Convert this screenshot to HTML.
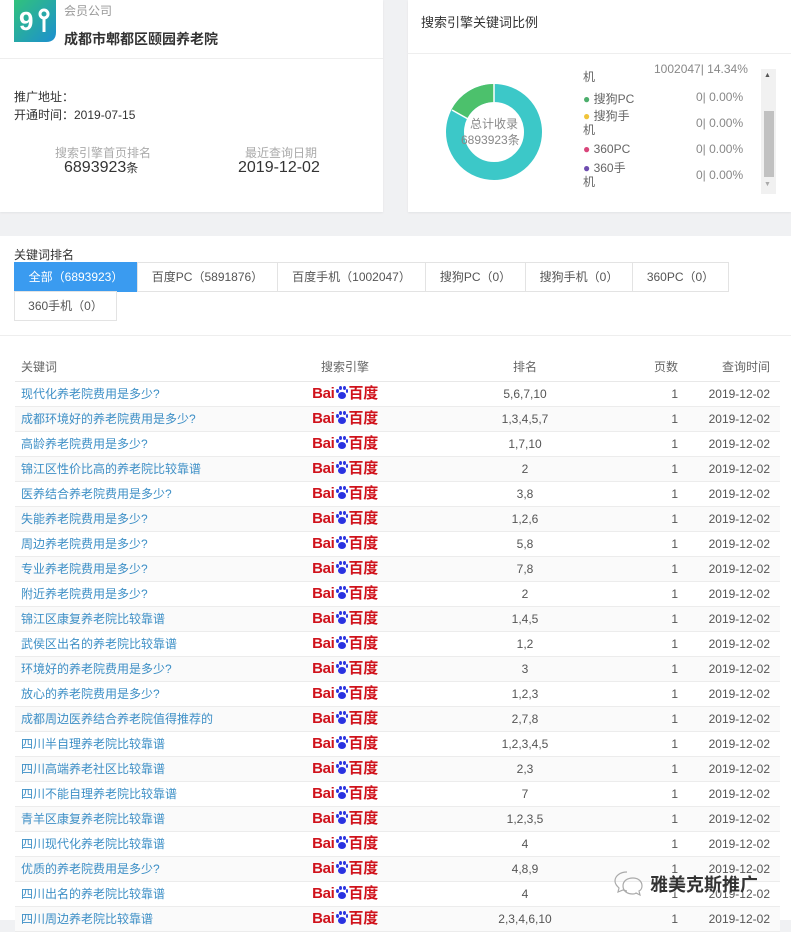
<!DOCTYPE html>
<html><head><meta charset="utf-8">
<style>
*{margin:0;padding:0;box-sizing:border-box}
body{width:791px;height:920px;overflow:hidden;background:#f0f1f3;font-family:"Liberation Sans","Noto Sans CJK SC",sans-serif;font-size:12px;color:#333;position:relative}
.card{position:absolute;background:#fff;box-shadow:0 1px 2px rgba(0,0,0,.06)}
.abs{position:absolute;white-space:nowrap}
.main{position:absolute;left:0;top:236px;width:791px;height:684px;background:#fff}
.tabs{position:absolute;left:14px;top:262px}
.tab{position:absolute;height:30px;line-height:29px;border:1px solid #e3e3e3;text-align:center;color:#555;font-size:12px;background:#fff}
.tab.on{background:#3a9bf0;color:#fff;border-color:#3a9bf0}
table{position:absolute;left:15px;top:352px;width:765px;border-collapse:collapse}
th{height:29px;font-weight:normal;color:#666;font-size:12px;border-bottom:1px solid #e8e8e8}
td{height:25px;border-bottom:1px solid #ececec;font-size:12px;color:#555}
tr:nth-child(even) td{background:#fafafa}
td.k{color:#3d8fc6;padding-left:6px}
.c1{width:220px;text-align:left;padding-left:6px}
.c2{width:220px;text-align:center}
.c3{width:140px;text-align:center}
.c4{width:85px;text-align:right;padding-right:2px}
.c5{text-align:right;padding-right:10px}
.bd{display:inline-block;font-weight:bold;color:#d0121b;font-size:15px;letter-spacing:-.3px;line-height:16px;vertical-align:middle}
.bd i{display:inline-block;width:12px;height:13px;position:relative;vertical-align:-1px;font-style:normal;margin:0 1px}
.bd i b{position:absolute;background:#2932e1;border-radius:50%}
</style></head><body>

<div class="card" style="left:0;top:0;width:383px;height:212px">
  <svg class="abs" style="left:14px;top:0" width="42" height="42" viewBox="0 0 42 42">
    <defs><linearGradient id="g" x1="0" y1="0" x2="1" y2="1"><stop offset="0" stop-color="#31c27c"/><stop offset="1" stop-color="#1c8fd0"/></linearGradient></defs>
    <path d="M0 0H42V32Q42 42 32 42H0Z" fill="url(#g)"/>
    <text x="5" y="30" font-family="Liberation Sans" font-weight="bold" font-size="26" fill="#fff">9</text>
    <circle cx="30" cy="14" r="4" fill="none" stroke="#fff" stroke-width="3"/><rect x="28.5" y="18" width="3" height="14" fill="#fff"/>
  </svg>
  <div class="abs" style="left:64px;top:2px;color:#999;font-size:12px">会员公司</div>
  <div class="abs" style="left:64px;top:29px;font-size:14px;font-weight:bold;color:#333">成都市郫都区颐园养老院</div>
  <div class="abs" style="left:0;top:58px;width:383px;border-top:1px solid #eee"></div>
  <div class="abs" style="left:14px;top:88px;color:#333">推广地址：</div>
  <div class="abs" style="left:14px;top:106px;color:#333">开通时间：2019-07-15</div>
  <div class="abs" style="left:55px;top:144px;color:#aaa">搜索引擎首页排名</div>
  <div class="abs" style="left:64px;top:159px;font-size:16px;color:#333">6893923<span style="font-size:12px">条</span></div>
  <div class="abs" style="left:245px;top:144px;color:#aaa">最近查询日期</div>
  <div class="abs" style="left:238px;top:159px;font-size:16px;color:#333">2019-12-02</div>
</div>

<div class="card" style="left:408px;top:0;width:383px;height:212px">
  <div class="abs" style="left:13px;top:12px;font-size:13px;color:#333">搜索引擎关键词比例</div>
  <div class="abs" style="left:0;top:53px;width:383px;border-top:1px solid #eee"></div>
  <svg class="abs" style="left:38px;top:84px" width="96" height="96" viewBox="0 0 96 96">
    <circle cx="48" cy="48" r="39" fill="none" stroke="#3cc8c8" stroke-width="18"/>
    <path d="M48 9 A39 39 0 0 0 13.5 29.7" fill="none" stroke="#4cc16c" stroke-width="18"/>
    <line x1="48" y1="0" x2="48" y2="18" stroke="#fff" stroke-width="1.5"/>
    <line x1="6" y1="26" x2="22" y2="35" stroke="#fff" stroke-width="1.5"/>
  </svg>
  <div class="abs" style="left:62px;top:115px;color:#888;font-size:12px">总计收录</div>
  <div class="abs" style="left:53px;top:131px;color:#888;font-size:12px">6893923条</div>
  <div class="abs" style="left:0;top:62px;width:383px;height:140px;overflow:hidden">
    <div class="abs" style="left:175px;top:6px;color:#666">机</div>
    <div class="abs" style="left:246px;top:0;color:#888">1002047| 14.34%</div>
    <div class="abs" style="left:175px;top:28px;color:#666"><span style="color:#4cae6c">●</span> 搜狗PC</div>
    <div class="abs" style="left:288px;top:28px;color:#888">0| 0.00%</div>
    <div class="abs" style="left:175px;top:47px;color:#666;line-height:14px"><span style="color:#f0c43a">●</span> 搜狗手<br>机</div>
    <div class="abs" style="left:288px;top:54px;color:#888">0| 0.00%</div>
    <div class="abs" style="left:175px;top:80px;color:#666"><span style="color:#d9457a">●</span> 360PC</div>
    <div class="abs" style="left:288px;top:80px;color:#888">0| 0.00%</div>
    <div class="abs" style="left:175px;top:99px;color:#666;line-height:14px"><span style="color:#6e4db0">●</span> 360手<br>机</div>
    <div class="abs" style="left:288px;top:106px;color:#888">0| 0.00%</div>
  </div>
  <div class="abs" style="left:353px;top:69px;width:15px;height:125px;background:#f1f1f1">
    <div class="abs" style="left:3px;top:42px;width:10px;height:66px;background:#c1c1c1"></div>
    <div class="abs" style="left:3px;top:3px;font-size:7px;color:#555">▲</div>
    <div class="abs" style="left:3px;top:112px;font-size:7px;color:#aaa">▼</div>
  </div>
</div>

<div class="main"></div>
<div class="abs" style="left:14px;top:246px;font-size:12px;color:#333">关键词排名</div>
<div class="tabs">
  <div class="tab on" style="left:0;top:0;width:124px">全部（6893923）</div>
  <div class="tab" style="left:123px;top:0;width:141px">百度PC（5891876）</div>
  <div class="tab" style="left:263px;top:0;width:149px">百度手机（1002047）</div>
  <div class="tab" style="left:411px;top:0;width:101px">搜狗PC（0）</div>
  <div class="tab" style="left:511px;top:0;width:108px">搜狗手机（0）</div>
  <div class="tab" style="left:618px;top:0;width:97px">360PC（0）</div>
  <div class="tab" style="left:0;top:29px;width:103px">360手机（0）</div>
</div>
<div class="abs" style="left:0;top:335px;width:791px;border-top:1px solid #eee"></div>

<table>
<tr><th class="c1">关键词</th><th class="c2">搜索引擎</th><th class="c3">排名</th><th class="c4">页数</th><th class="c5">查询时间</th></tr>
</table>
<script>
const rows=[["现代化养老院费用是多少?","5,6,7,10"],["成都环境好的养老院费用是多少?","1,3,4,5,7"],["高龄养老院费用是多少?","1,7,10"],["锦江区性价比高的养老院比较靠谱","2"],["医养结合养老院费用是多少?","3,8"],["失能养老院费用是多少?","1,2,6"],["周边养老院费用是多少?","5,8"],["专业养老院费用是多少?","7,8"],["附近养老院费用是多少?","2"],["锦江区康复养老院比较靠谱","1,4,5"],["武侯区出名的养老院比较靠谱","1,2"],["环境好的养老院费用是多少?","3"],["放心的养老院费用是多少?","1,2,3"],["成都周边医养结合养老院值得推荐的","2,7,8"],["四川半自理养老院比较靠谱","1,2,3,4,5"],["四川高端养老社区比较靠谱","2,3"],["四川不能自理养老院比较靠谱","7"],["青羊区康复养老院比较靠谱","1,2,3,5"],["四川现代化养老院比较靠谱","4"],["优质的养老院费用是多少?","4,8,9"],["四川出名的养老院比较靠谱","4"],["四川周边养老院比较靠谱","2,3,4,6,10"]];
const logo='<span class="bd">Bai<i><b style="left:0;top:3px;width:3px;height:4px"></b><b style="left:3px;top:0;width:3px;height:4px"></b><b style="left:7px;top:0;width:3px;height:4px"></b><b style="left:10px;top:3px;width:2px;height:4px"></b><b style="left:2px;top:6px;width:8px;height:7px"></b></i>百度</span>';
let h='';for(const r of rows)h+=`<tr><td class="c1 k">${r[0]}</td><td class="c2">${logo}</td><td class="c3">${r[1]}</td><td class="c4">1</td><td class="c5">2019-12-02</td></tr>`;
document.querySelector('table').insertAdjacentHTML('beforeend',h);
</script>
<svg class="abs" style="left:613px;top:868px" width="34" height="30" viewBox="0 0 34 30"><path d="M14 4C7 4 2 8 2 13c0 3 2 5 4 7l-1 4 5-2c1 0 3 1 4 1" fill="none" stroke="#aaa" stroke-width="1.2"/><path d="M20 10c-6 0-10 3-10 8s4 8 10 8c1 0 2 0 3-1l4 2-1-4c2-1 3-3 3-5 0-5-4-8-9-8z" fill="none" stroke="#aaa" stroke-width="1.2"/></svg>
<div class="abs" style="left:650px;top:871px;font-size:18px;color:#333;font-weight:bold;text-shadow:0 0 2px #fff,0 0 2px #fff">雅美克斯推广</div>
</body></html>
